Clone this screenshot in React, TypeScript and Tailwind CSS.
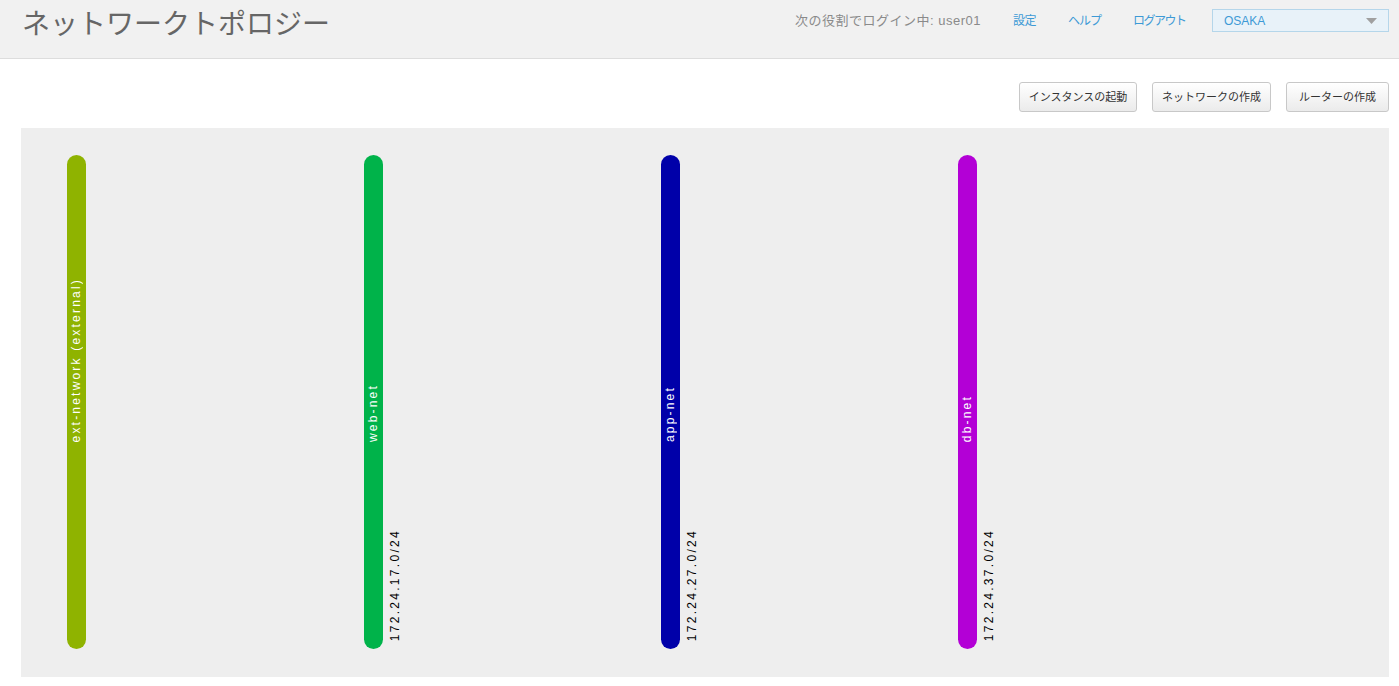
import React from "react";

const nets = [
  { name: "ext-network (external)", color: "#8fb300", cidr: "" },
  { name: "web-net", color: "#00b34a", cidr: "172.24.17.0/24" },
  { name: "app-net", color: "#0000a9", cidr: "172.24.27.0/24" },
  { name: "db-net", color: "#b300d6", cidr: "172.24.37.0/24" },
];

const JP = "font-['Liberation_Sans','Noto_Sans_CJK_JP',sans-serif]";

export default function App() {
  return (
    <div className={`w-[1399px] h-[686px] bg-white overflow-hidden ${JP}`}>
      <header className="h-[59px] bg-[#f1f1f1] border-b border-[#dddddd] flex items-start justify-between">
        <h1 className="ml-[22px] mt-[5px] text-[28px] leading-[40px] text-[#666666] font-normal">
          ネットワークトポロジー
        </h1>
        <div className="flex items-center mt-[9px] mr-[10px] text-[13px]">
          <span className="text-[#8a8a8a] tracking-[0.5px] mr-[32px]">次の役割でログイン中: user01</span>
          <span className="w-[55px] text-[12px] tracking-[-0.5px] text-[#3d9ad6]">設定</span>
          <span className="w-[65px] text-[12px] tracking-[-1px] text-[#3d9ad6]">ヘルプ</span>
          <span className="w-[79px] text-[12px] tracking-[-1.5px] text-[#3d9ad6]">ログアウト</span>
          <div className="w-[177px] h-[23px] bg-[#e8f2f9] border border-[#b5d6ea] flex items-center justify-between px-[11px]">
            <span className="text-[12px] text-[#3d9ad6]">OSAKA</span>
            <svg width="11" height="6" viewBox="0 0 11 6">
              <path d="M0 0 H11 L5.5 6 Z" fill="#a0a0a0" />
            </svg>
          </div>
        </div>
      </header>

      <div className="flex justify-end gap-[15px] pr-[10px] pt-[23px]">
        {[
          ["インスタンスの起動", "w-[118px]"],
          ["ネットワークの作成", "w-[119px]"],
          ["ルーターの作成", "w-[103px]"],
        ].map(([t, w]) => (
          <button
            key={t}
            className={`${w} h-[30px] rounded-[3px] border border-[#c8c8c8] bg-gradient-to-b from-[#ffffff] to-[#ebebeb] text-[11px] text-[#333333] flex items-center justify-center`}
          >
            {t}
          </button>
        ))}
      </div>

      <div className="mt-[16px] ml-[21px] w-[1368px] h-[549px] bg-[#eeeeee] flex pt-[27px] pl-[46px] gap-[278px]">
        {nets.map((n) => (
          <div
            key={n.name}
            className="relative w-[19px] h-[494px] rounded-full"
            style={{ backgroundColor: n.color }}
          >
            <span className="absolute left-0 w-[19px] bottom-[207px] flex justify-center">
              <span className="[writing-mode:vertical-rl] rotate-180 text-[12px] tracking-[2.2px] text-white leading-[19px] whitespace-nowrap font-['Liberation_Sans',sans-serif]">
                {n.name}
              </span>
            </span>
            {n.cidr && (
              <span className="absolute left-[24px] bottom-[8px] [writing-mode:vertical-rl] rotate-180 text-[12px] tracking-[2.3px] text-black leading-[14px] whitespace-nowrap font-['Liberation_Sans',sans-serif]">
                {n.cidr}
              </span>
            )}
          </div>
        ))}
      </div>
    </div>
  );
}
